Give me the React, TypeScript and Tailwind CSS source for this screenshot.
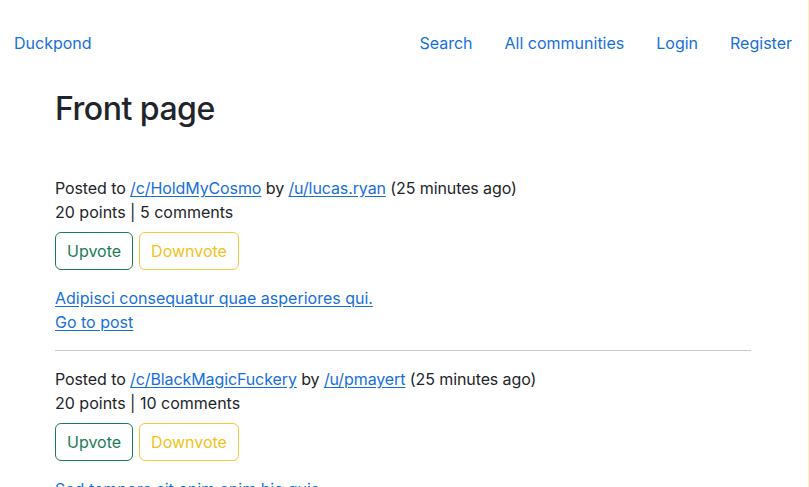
const posts = [
  {
    community: "HoldMyCosmo",
    user: "lucas.ryan",
    points: 20,
    comments: 5,
    title: "Adipisci consequatur quae asperiores qui.",
  },
  {
    community: "BlackMagicFuckery",
    user: "pmayert",
    points: 20,
    comments: 10,
    title: "Sed tempore sit enim enim hic quis.",
  },
];

const link = "text-[#1670d9] underline underline-offset-[2px]";

const Post = ({ post }: { post: (typeof posts)[number] }) => (
  <div className="flex flex-col">
    <div className="tracking-[-0.1px]">
      Posted to{" "}
      <a href="#" className={link}>
        /c/{post.community}
      </a>{" "}
      by{" "}
      <a href="#" className={link}>
        /u/{post.user}
      </a>{" "}
      (25 minutes ago)
    </div>
    <div>
      {post.points} points | {post.comments} comments
    </div>
    <div className="mt-2 flex gap-[6px]">
      <button className="h-[38px] rounded-[6px] border border-[#1c7c56] px-[11px] text-[#1c7c56]">
        Upvote
      </button>
      <button className="h-[38px] rounded-[6px] border border-[#f5c842] px-[11px] text-[#f2c21b]">
        Downvote
      </button>
    </div>
    <div className="mt-4 flex flex-col items-start">
      <a href="#" className={link}>
        {post.title}
      </a>
      <a href="#" className={link}>
        Go to post
      </a>
    </div>
  </div>
);

export default function App() {
  return (
    <div
      className="h-screen overflow-hidden border-r border-[#fbf0c4] bg-white text-[16px] leading-6 text-[#212529]"
      style={{ fontFamily: "Inter, 'Liberation Sans', sans-serif" }}
    >
      <nav className="flex h-[86px] items-center justify-between pl-[14px]">
        <a href="#" className="text-[#1670d9]">
          Duckpond
        </a>
        <div className="flex">
          <a href="#" className="px-4 text-[#1670d9]">
            Search
          </a>
          <a href="#" className="px-4 text-[#1670d9]">
            All communities
          </a>
          <a href="#" className="px-4 text-[#1670d9]">
            Login
          </a>
          <a href="#" className="px-4 text-[#1670d9]">
            Register
          </a>
        </div>
      </nav>

      <main className="ml-[43px] w-[720px] px-3 pt-[2px]">
        <h1 className="mb-[47px] text-[32px] font-medium leading-[41px] tracking-[-0.5px]">
          Front page
        </h1>
        <div className="flex flex-col">
          {posts.map((post, i) => (
            <div key={i} className="flex flex-col">
              {i > 0 && <hr className="my-4 border-t border-[#c9cacb]" />}
              <Post post={post} />
            </div>
          ))}
        </div>
      </main>
    </div>
  );
}
